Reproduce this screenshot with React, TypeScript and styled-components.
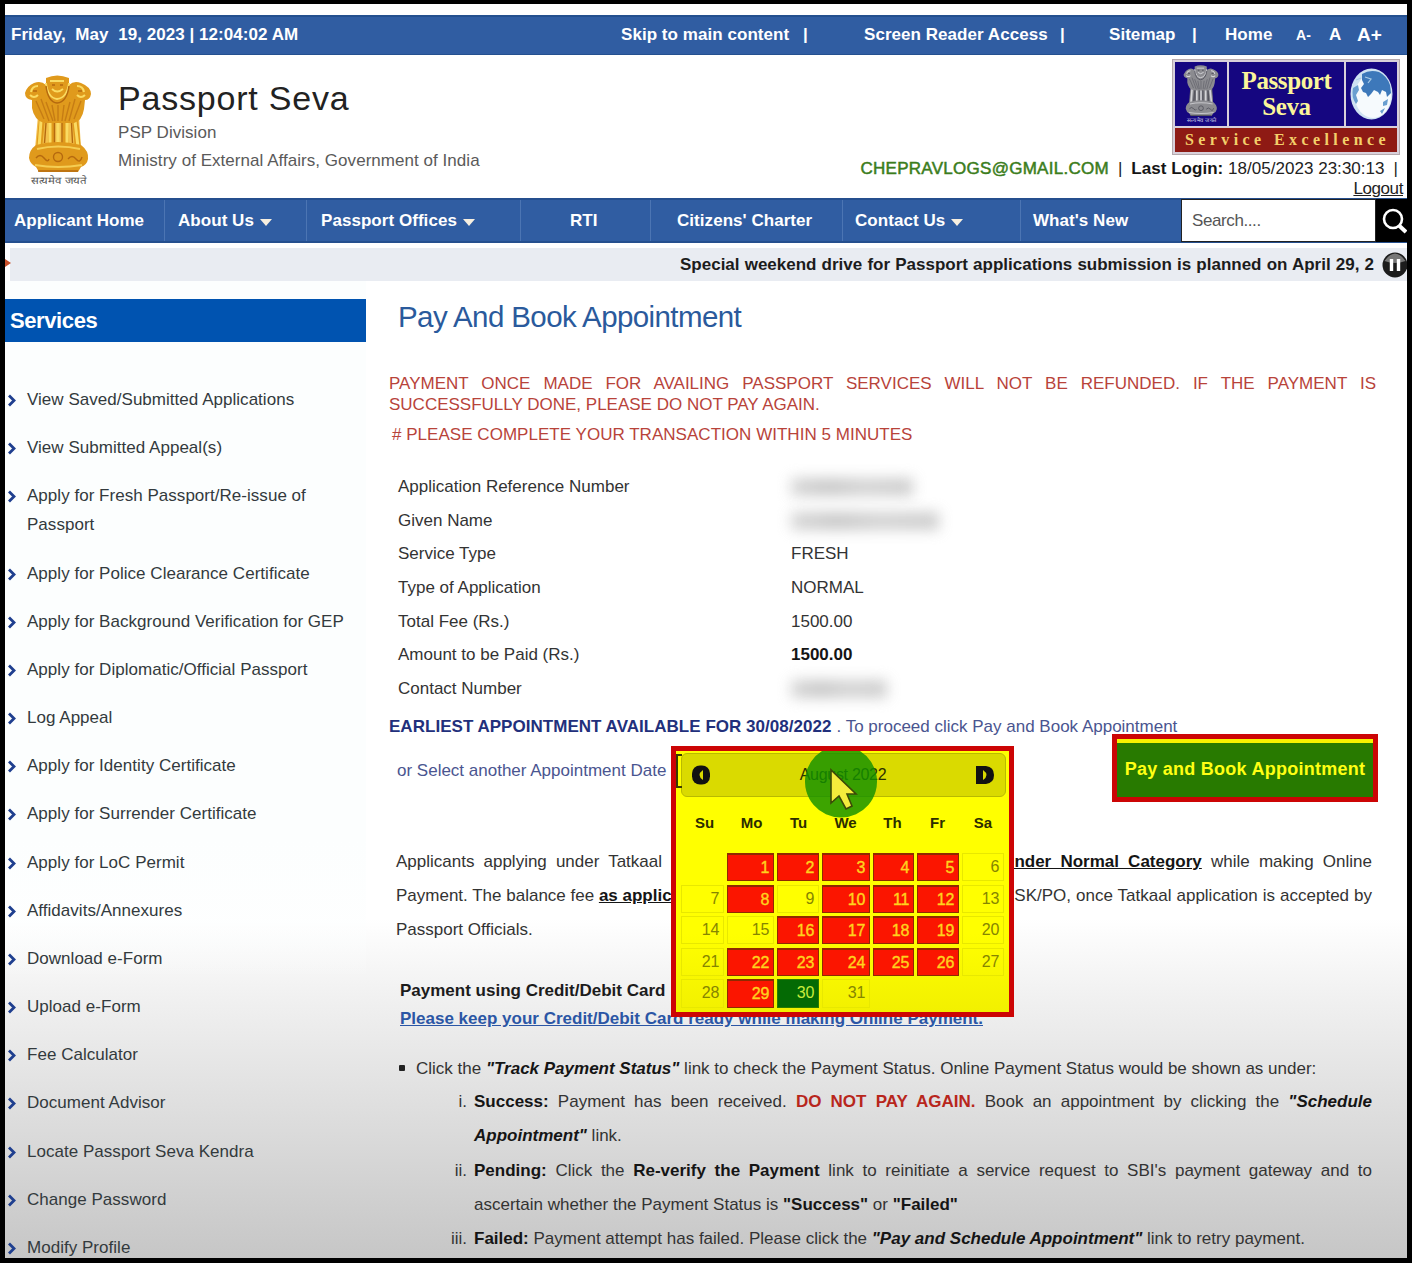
import React from 'react';
import styled, { createGlobalStyle, css } from 'styled-components';

const GlobalStyle = createGlobalStyle`
  * { box-sizing: border-box; }
  html, body { margin: 0; padding: 0; background: #000; }
  body { font-family: "Liberation Sans", Arial, sans-serif; font-size: 17px; color: #333; }
  p, h1, h2, ul, ol { margin: 0; padding: 0; font-weight: normal; }
`;

const Page = styled.div`
  position: relative;
  width: 1412px;
  height: 1263px;
  overflow: hidden;
  display: flex;
  flex-direction: column;
  border: solid #000;
  border-width: 4px 5px 5px 5px;
  background: linear-gradient(#fff 0 915px, #f2f2f2 985px, #dcdcdc 1120px, #c6c6c6 1254px);
`;

/* A single line of text, optionally stretched over a given width. */
const Line = styled.span<{ $w?: number; $ls?: number }>`
  display: inline-block;
  flex: none;
  white-space: nowrap;
  ${(p) => p.$w && css`width: ${p.$w}px; text-align: justify; text-align-last: justify;`}
  ${(p) => p.$ls && css`letter-spacing: ${p.$ls}px;`}
`;

const TopBar = styled.header`
  flex: none;
  display: grid;
  grid-template-columns: 610px 182px 61px 196px 49px 83px 33px 71px 33px 28px auto;
  align-items: center;
  height: 40px;
  margin-top: 11px;
  padding: 0 0 1px 6px;
  border-top: 2px solid #24508f;
  border-bottom: 1px solid #24508f;
  background: #305da2;
  color: #fff;
  font-weight: bold;
  letter-spacing: 0.05px;
  white-space: pre;
`;

const FontSize = styled.span<{ $size: number }>`
  font-size: ${(p) => p.$size}px;
`;

const Masthead = styled.div`
  flex: none;
  display: flex;
  height: 143px;
`;

const EmblemBox = styled.div`
  width: 113px;
  padding: 20px 0 0 19px;
`;

const Brand = styled.div`
  flex: 1;
  padding-top: 23px;
  color: #5a5a5a;
`;

const BrandTitle = styled.h1`
  font-size: 34px;
  line-height: 41px;
  letter-spacing: 0.8px;
  color: #222;
`;

const BrandLine = styled.p`
  line-height: 28px;
  letter-spacing: 0.04px;
`;

const Account = styled.div`
  width: 560px;
  display: flex;
  flex-direction: column;
  align-items: flex-end;
`;

const LogoBox = styled.div`
  width: 228px;
  height: 97px;
  margin: 4px 7px 0 0;
  padding: 2px;
  border: 1px solid #b5a9ad;
  background: #d8d0da;
  display: flex;
  flex-direction: column;
`;

const LogoTop = styled.div`
  display: grid;
  grid-template-columns: 52px 115px 51px;
  gap: 2px;
  height: 64px;
`;

const LogoCell = styled.div`
  display: flex;
  align-items: center;
  justify-content: center;
  background: #150680;
`;

const LogoName = styled.div`
  font: bold 25px/26px "Liberation Serif", serif;
  letter-spacing: -0.4px;
  text-align: center;
  color: #fbf59a;
`;

const LogoMotto = styled.div`
  flex: 1;
  margin-top: 2px;
  padding-left: 3px;
  background: #8e1a14;
  color: #f3cf6a;
  font: bold 16px/23px "Liberation Serif", serif;
  letter-spacing: 4.4px;
  text-align: center;
  white-space: nowrap;
`;

const LoginLine = styled.div`
  display: flex;
  gap: 9px;
  margin: 4px 9px 0 0;
  line-height: 20px;
  white-space: nowrap;
  color: #222;
`;

const Mail = styled.span`
  color: #3b7d1c;
  -webkit-text-stroke: 0.5px #3b7d1c;
  letter-spacing: 0.27px;
`;

const Logout = styled.a`
  margin: 1px 4px 0 0;
  line-height: 18px;
  letter-spacing: -0.4px;
  text-decoration: underline;
  color: #222;
`;

const Nav = styled.nav`
  flex: none;
  display: grid;
  grid-template-columns: 160px 142px 214px 130px 192px 178px 160px 195px 31px;
  height: 45px;
  border-top: 2px solid #254f8e;
  border-bottom: 2px solid #254f8e;
  background: #305da2;
`;

const NavItem = styled.a<{ $pad: number }>`
  display: flex;
  align-items: center;
  padding-left: ${(p) => p.$pad}px;
  border-right: 1px solid #4c75b3;
  color: #fff;
  font-weight: bold;
  letter-spacing: 0.05px;
  white-space: nowrap;
  &:nth-child(7) { border-right: 0; }
`;

const Caret = styled.i`
  margin: 3px 0 0 6px;
  border: 6.5px solid transparent;
  border-top: 7px solid #f7efe0;
  border-bottom: 0;
`;

const Search = styled.div`
  display: flex;
  align-items: center;
  margin: -1px 0;
  padding-left: 10px;
  border: 1px solid #222;
  background: #fff;
  color: #555;
  letter-spacing: -0.4px;
`;

const SearchButton = styled.div`
  display: flex;
  align-items: center;
  padding-left: 5px;
  margin: -1px 0;
  background: #000;
`;

const Ticker = styled.div`
  flex: none;
  display: flex;
  align-items: center;
  justify-content: flex-end;
  height: 33px;
  margin: 5px 0 0 0;
  background: linear-gradient(90deg, #fff 5px, #e9ecf2 5px);
  color: #1c1c1c;
  font-weight: bold;
`;

const TickerMark = styled.i`
  margin: -3px auto 0 0;
  border: 4px solid transparent;
  border-left: 6px solid #c8502a;
  border-right: 0;
`;

const Body = styled.div`
  flex: 1;
  display: grid;
  grid-template-columns: 361px 1fr;
  min-height: 0;
`;

const Sidebar = styled.aside`
  padding-top: 18px;
  background: linear-gradient(#fcfefe 0 560px, rgba(252, 254, 254, 0) 700px);
`;

const SidebarTitle = styled.h2`
  height: 43px;
  padding-left: 5px;
  background: #0053b0;
  color: #fff;
  font-size: 22px;
  font-weight: bold;
  line-height: 43px;
  letter-spacing: -0.4px;
`;

const ServiceList = styled.ul`
  display: flex;
  flex-direction: column;
  gap: 19.18px;
  padding-top: 43px;
  list-style: none;
`;

const Service = styled.li`
  display: flex;
  gap: 11px;
  padding-left: 3px;
  line-height: 29px;
  color: #333a3d;
  svg { flex: none; margin-top: 9px; }
`;

const ServiceLabel = styled.span`
  white-space: pre-line;
  letter-spacing: 0.03px;
`;

const Main = styled.main`
  display: flex;
  flex-direction: column;
  padding-left: 23px;
  color: #333;
`;

const Title = styled.h2`
  height: 75px;
  padding: 18px 0 0 9px;
  font-size: 29.5px;
  line-height: 36px;
  letter-spacing: -0.6px;
  color: #2a5a9c;
`;

const Warning = styled.div`
  display: flex;
  flex-direction: column;
  margin-top: 17px;
  line-height: 21px;
  color: #b8433a;
`;

const TimeLimit = styled.p`
  margin: 9px 0 0 3px;
  letter-spacing: 0.03px;
`;

const Fields = styled.dl`
  display: grid;
  grid-template-columns: 393px 200px;
  grid-auto-rows: 33.6px;
  align-items: center;
  margin: 25.5px 0 0;
  padding-left: 9px;
  dd { margin: 0; }
`;

const Redacted = styled.div<{ $w: number }>`
  width: ${(p) => p.$w}px;
  height: 18px;
  background: linear-gradient(90deg, #c9c9c9, #b5b5b5 30%, #c4c4c4 60%, #bcbcbc);
  filter: blur(7px);
  opacity: 0.75;
`;

const Earliest = styled.p`
  display: flex;
  gap: 5px;
  margin-top: 10.3px;
  line-height: 22px;
  color: #4a5590;
  b { color: #22307c; }
`;

const DateRow = styled.p`
  margin-top: 22px;
  padding-left: 8px;
  line-height: 22px;
  color: #4a5590;
`;

const Note = styled.div`
  display: flex;
  flex-direction: column;
  margin-top: 63px;
  padding-left: 7px;
  line-height: 34px;
`;

const Row = styled.div`
  display: flex;
  justify-content: space-between;
  width: 976px;
`;

const Strong = styled.b`
  color: #151515;
`;

const Key = styled.b`
  color: #151515;
  text-decoration: underline;
`;

const CardNote = styled.div`
  display: flex;
  flex-direction: column;
  margin-top: 30px;
  padding-left: 11px;
  font-weight: bold;
  line-height: 28px;
  color: #1c1c1c;
`;

const CardLink = styled(Line)`
  color: #2b56a5;
  text-decoration: underline;
`;

const Status = styled.div`
  display: flex;
  align-items: center;
  margin-top: 19px;
  padding-left: 10px;
  line-height: 33px;
`;

const Bullet = styled.i`
  width: 6px;
  height: 6px;
  margin-right: 11px;
  border-radius: 1px;
  background: #222;
`;

const Step = styled.div`
  display: grid;
  grid-template-columns: 78px 1fr;
  column-gap: 7px;
  line-height: 34.3px;
`;

const StepNo = styled.span`
  text-align: right;
`;

const StepText = styled.div`
  display: flex;
  flex-direction: column;
`;

const Danger = styled.b`
  color: #b8261c;
`;

const Em = styled.b`
  font-style: italic;
  color: #151515;
`;

const PayButton = styled.button`
  position: absolute;
  left: 1107px;
  top: 730px;
  width: 266px;
  height: 68px;
  padding: 3px 0 0;
  border: 5px solid #cc0505;
  background: linear-gradient(#f7f200 0 4px, #287a00 4px);
  color: #ffff14;
  font: bold 18px "Liberation Sans", Arial, sans-serif;
  letter-spacing: 0.25px;
`;

const Calendar = styled.div`
  position: absolute;
  left: 666px;
  top: 742px;
  width: 343px;
  height: 271px;
  padding: 2px 3px 0 5px;
  border: 5px solid #cc0505;
  background: linear-gradient(#ff0 70%, #f2f000);
`;

const MonthBar = styled.div`
  display: flex;
  align-items: center;
  justify-content: space-between;
  height: 44px;
  padding: 0 10px 0 9px;
  border: 1px solid #b9ba00;
  border-radius: 6px;
  background: #dada00;
  color: #2c3000;
  font-size: 16px;
  letter-spacing: -0.3px;
`;

const WeekHead = styled.div`
  display: grid;
  grid-template-columns: 47px 47px 47px 47px 47px 43px 48px;
  height: 56px;
  line-height: 52px;
  font-size: 15px;
  font-weight: bold;
  text-align: center;
  color: #2c2d00;
`;

const Days = styled.div`
  display: grid;
  grid-template-columns: 43px 47px 42px 48px 41px 42px 42px;
  grid-template-rows: 28px 28px 28px 28px 29px;
  gap: 3.5px;
  column-gap: 3px;
`;

type DayKind = 'empty' | 'off' | 'full' | 'open';

const Day = styled.div<{ $kind: DayKind }>`
  padding-right: 4px;
  border: 1px solid transparent;
  line-height: 26px;
  font-size: 16px;
  letter-spacing: -0.3px;
  text-align: right;
  color: #858500;
  ${(p) => p.$kind === 'off' && css`border-color: #e8e800;`}
  ${(p) => p.$kind === 'full' && css`
    border-color: #8f2a00;
    border-top-width: 2px;
    background: #fb1500;
    color: #ffd21e;
    -webkit-text-stroke: 0.4px #ffd21e;
    line-height: 25px;
  `}
  ${(p) => p.$kind === 'open' && css`
    border-color: #2c7a00;
    background: #046a04;
    color: #c8ec3c;
  `}
`;

const Pointer = styled.svg`
  position: absolute;
  left: 127px;
  top: 0;
`;

const FieldBracket = styled.i`
  position: absolute;
  left: 0;
  top: 3px;
  width: 6px;
  height: 34px;
  border: 2px solid #3a3b00;
  border-right: 0;
`;

const services = [
  'View Saved/Submitted Applications',
  'View Submitted Appeal(s)',
  'Apply for Fresh Passport/Re-issue of\nPassport',
  'Apply for Police Clearance Certificate',
  'Apply for Background Verification for GEP',
  'Apply for Diplomatic/Official Passport',
  'Log Appeal',
  'Apply for Identity Certificate',
  'Apply for Surrender Certificate',
  'Apply for LoC Permit',
  'Affidavits/Annexures',
  'Download e-Form',
  'Upload e-Form',
  'Fee Calculator',
  'Document Advisor',
  'Locate Passport Seva Kendra',
  'Change Password',
  'Modify Profile',
];

const openDays = [6, 7, 9, 13, 14, 15, 20, 21, 27, 28, 31];

const kindOf = (day: number): DayKind => {
  if (day === 30) return 'open';
  return openDays.includes(day) ? 'off' : 'full';
};

function Emblem({ tone, width, height }: { tone: 'gold' | 'silver'; width: number; height: number }) {
  const gold = tone === 'gold';
  const base = gold ? '#e09a1c' : '#8b8b90';
  const dark = gold ? '#b5690f' : '#4a4a55';
  const light = gold ? '#fadb62' : '#d4d4d8';
  return (
    <svg width={width} height={height} viewBox="0 0 68 112">
      <path d="M14 40H55L57 74H11Z" fill={gold ? '#f3c04a' : '#6a6a72'} />
      <path d="M18 44L15 74M28 46L27 74M41 46L42 74M51 44L54 74" stroke={base} strokeWidth="6" />
      <path d="M17 46L15 72M26 48L26 72M34 48V72M43 48L43 72M51 46L54 72" stroke={light} strokeWidth="3" />
      <path d="M22 48L20.500 68M30.500 48V70M38 48V70M47.500 48L48.500 68" stroke={dark} strokeWidth="1.400" />
      <path d="M22 3Q33-2 45 3L45 10Q50 5 57 8Q67 12 67 19Q66 25 61 25L60 34Q58 46 50 48L20 48Q10 45 8 33L8 25Q1 24 1 18Q3 11 10 8Q17 5 22 10Z" fill={base} />
      <path d="M7 17q1-6 7-6M6 20q4 4 8 0M60 17q-1-6-7-6M61 20q-4 4-8 0" fill="none" stroke={light} strokeWidth="2" />
      <path d="M22 8Q24 23 33 24Q43 23 45 8M26 6H40M28 14Q33 19 39 14" fill="none" stroke={light} strokeWidth="1.800" />
      <path d="M22 11Q24 27 33 28Q43 27 45 11M9 16h4M54 16h4M28 10h3M36 10h3" fill="none" stroke={dark} strokeWidth="1.500" />
      <path d="M12 26L20 44M17 24L25 46M22 27L29 46M28 30L31 46M34 30V46M40 30L38 46M46 27L41 46M51 24L45 46M57 26L50 44" stroke={dark} strokeWidth="1.400" opacity="0.6" />
      <path d="M12 70Q33 64 57 70Q65 76 64 84Q63 90 57 92L54 97H15L12 92Q6 89 5 83Q5 75 12 70Z" fill={base} />
      <path d="M13 74Q34 69 56 74M11 90Q34 94 58 90" fill="none" stroke={light} strokeWidth="2" opacity="0.8" />
      <path d="M14 96H54" stroke={dark} strokeWidth="1.600" />
      <circle cx="34" cy="82" r="4.500" fill="none" stroke={dark} strokeWidth="1.400" />
      <path d="M12 83q4-5 8 0t5 1M44 84q4-5 8 0t6-2" fill="none" stroke={dark} strokeWidth="1.400" />
      <text x="35" y="109" textAnchor="middle" fontSize="10" textLength="56" lengthAdjust="spacingAndGlyphs" fill={gold ? '#555' : '#d5d5ea'}>
        सत्यमेव जयते
      </text>
    </svg>
  );
}

function Globe() {
  return (
    <svg width="43" height="52" viewBox="0 0 43 52">
      <ellipse cx="21.500" cy="26" rx="21" ry="25.500" fill="#cfe2f2" />
      <ellipse cx="23" cy="28" rx="18" ry="22" fill="#f6fafd" />
      <path d="M12 6Q20 1 29 4Q37 8 40 17L41 25L37 29L36 24L32 22L30 27L28 24L24 22L21 26L18 29L16 25L13 24L11 20L14 16L12 12Z" fill="#3d78ba" />
      <path d="M3 20L8 17L9 22L6 27L8 33L6 36Q1 29 3 20ZM33 34L38 31L37 37L33 38ZM30 43l5-3-3 6z" fill="#6a9fd0" />
      <path d="M15 9l6 2-3 4M6 12l5-2" fill="none" stroke="#a9cbe6" strokeWidth="1.200" />
    </svg>
  );
}

export default function App() {
  return (
    <>
      <GlobalStyle />
      <Page>
        <TopBar>
          <span>{'Friday,  May  19, 2023 | 12:04:02 AM'}</span>
          <span>Skip to main content</span>
          <span>|</span>
          <span>Screen Reader Access</span>
          <span>|</span>
          <span>Sitemap</span>
          <span>|</span>
          <span>Home</span>
          <FontSize $size={14}>A-</FontSize>
          <FontSize $size={17}>A</FontSize>
          <FontSize $size={19}>A+</FontSize>
        </TopBar>

        <Masthead>
          <EmblemBox>
            <Emblem tone="gold" width={68} height={112} />
          </EmblemBox>
          <Brand>
            <BrandTitle>Passport Seva</BrandTitle>
            <BrandLine>PSP Division</BrandLine>
            <BrandLine>Ministry of External Affairs, Government of India</BrandLine>
          </Brand>
          <Account>
            <LogoBox>
              <LogoTop>
                <LogoCell><Emblem tone="silver" width={36} height={59} /></LogoCell>
                <LogoCell><LogoName>Passport<br />Seva</LogoName></LogoCell>
                <LogoCell><Globe /></LogoCell>
              </LogoTop>
              <LogoMotto>Service Excellence</LogoMotto>
            </LogoBox>
            <LoginLine>
              <Mail>CHEPRAVLOGS@GMAIL.COM</Mail>
              <span>|</span>
              <Line $ls={0.03}><Strong>Last Login:</Strong> 18/05/2023 23:30:13</Line>
              <span>|</span>
            </LoginLine>
            <Logout>Logout</Logout>
          </Account>
        </Masthead>

        <Nav>
          <NavItem $pad={9}>Applicant Home</NavItem>
          <NavItem $pad={13}>About Us<Caret /></NavItem>
          <NavItem $pad={14}>Passport Offices<Caret /></NavItem>
          <NavItem $pad={49}>RTI</NavItem>
          <NavItem $pad={26}>Citizens' Charter</NavItem>
          <NavItem $pad={12}>Contact Us<Caret /></NavItem>
          <NavItem $pad={12}>What's New</NavItem>
          <Search>Search....</Search>
          <SearchButton>
            <svg width="26" height="28" viewBox="0 0 26 28" fill="none" stroke="#fff" strokeWidth="2.600">
              <circle cx="12" cy="12" r="9" />
              <path d="M18 18.500L25 25" strokeWidth="4" />
            </svg>
          </SearchButton>
        </Nav>

        <Ticker>
          <TickerMark />
          <Line $w={694}>Special weekend drive for Passport applications submission is planned on April 29, 2</Line>
          <svg width="33" height="28" viewBox="0 0 33 28">
            <circle cx="21" cy="14" r="12.500" fill="#1c1c1c" />
            <path d="M10.500 10Q21-5 31.500 10Q21 14 10.500 10Z" fill="#777" />
            <path d="M17.500 8V20M24.500 8V20" stroke="#fff" strokeWidth="3.400" />
          </svg>
        </Ticker>

        <Body>
          <Sidebar>
            <SidebarTitle>Services</SidebarTitle>
            <ServiceList>
              {services.map((name) => (
                <Service key={name}>
                  <svg width="8" height="13" viewBox="0 0 8 13" fill="none" stroke="#1f3f8f" strokeWidth="2.800">
                    <path d="M1 1.500L6 6.500L1 11.500" />
                  </svg>
                  <ServiceLabel>{name}</ServiceLabel>
                </Service>
              ))}
            </ServiceList>
          </Sidebar>

          <Main>
            <Title>Pay And Book Appointment</Title>
            <Warning>
              <Line $w={987}>PAYMENT ONCE MADE FOR AVAILING PASSPORT SERVICES WILL NOT BE REFUNDED. IF THE PAYMENT IS</Line>
              <Line>SUCCESSFULLY DONE, PLEASE DO NOT PAY AGAIN.</Line>
              <TimeLimit># PLEASE COMPLETE YOUR TRANSACTION WITHIN 5 MINUTES</TimeLimit>
            </Warning>
            <Fields>
              <dt>Application Reference Number</dt><dd><Redacted $w={122} /></dd>
              <dt>Given Name</dt><dd><Redacted $w={148} /></dd>
              <dt>Service Type</dt><dd>FRESH</dd>
              <dt>Type of Application</dt><dd>NORMAL</dd>
              <dt>Total Fee (Rs.)</dt><dd>1500.00</dd>
              <dt>Amount to be Paid (Rs.)</dt><dd><Strong>1500.00</Strong></dd>
              <dt>Contact Number</dt><dd><Redacted $w={96} /></dd>
            </Fields>
            <Earliest>
              <Line $ls={0.03}><b>EARLIEST APPOINTMENT AVAILABLE FOR 30/08/2022</b></Line>
              <Line>. To proceed click Pay and Book Appointment</Line>
            </Earliest>
            <DateRow>or Select another Appointment Date</DateRow>
            <Note>
              <Row>
                <Line $w={266}>Applicants applying under Tatkaal</Line>
                <Line $w={368}><Key>under Normal Category</Key> while making Online</Line>
              </Row>
              <Row>
                <Line>Payment. The balance fee <Key>as applicable</Key></Line>
                <Line $w={369}>PSK/PO, once Tatkaal application is accepted by</Line>
              </Row>
              <Row>Passport Officials.</Row>
            </Note>
            <CardNote>
              <Line>Payment using Credit/Debit Card :</Line>
              <CardLink as="a" $w={583}>Please keep your Credit/Debit Card ready while making Online Payment.</CardLink>
            </CardNote>
            <Status>
              <Bullet />
              <Line>Click the <Em>"Track Payment Status"</Em> link to check the Payment Status. Online Payment Status would be shown as under:</Line>
            </Status>
            <Step>
              <StepNo>i.</StepNo>
              <StepText>
                <Line $w={898}><Strong>Success:</Strong> Payment has been received. <Danger>DO NOT PAY AGAIN.</Danger> Book an appointment by clicking the <Em>"Schedule</Em></Line>
                <Line><Em>Appointment"</Em> link.</Line>
              </StepText>
            </Step>
            <Step>
              <StepNo>ii.</StepNo>
              <StepText>
                <Line $w={898}><Strong>Pending:</Strong> Click the <Strong>Re-verify the Payment</Strong> link to reinitiate a service request to SBI's payment gateway and to</Line>
                <Line>ascertain whether the Payment Status is <Strong>"Success"</Strong> or <Strong>"Failed"</Strong></Line>
              </StepText>
            </Step>
            <Step>
              <StepNo>iii.</StepNo>
              <StepText>
                <Line><Strong>Failed:</Strong> Payment attempt has failed. Please click the <Em>"Pay and Schedule Appointment"</Em> link to retry payment.</Line>
              </StepText>
            </Step>
          </Main>
        </Body>

        <PayButton>Pay and Book Appointment</PayButton>

        <Calendar>
          <FieldBracket />
          <MonthBar>
            <svg width="20" height="20" viewBox="0 0 20 20">
              <rect x="1" y="0.500" width="18" height="19" rx="8" fill="#111" />
              <path d="M12 5V15Q5 10 12 5Z" fill="#dada00" />
            </svg>
            <span>August 2022</span>
            <svg width="20" height="20" viewBox="0 0 20 20">
              <path d="M1 1H11Q19 2 19 10Q19 18 11 19H1Z" fill="#111" />
              <path d="M8 5V15Q15 10 8 5Z" fill="#dada00" />
            </svg>
          </MonthBar>
          <WeekHead>
            {['Su', 'Mo', 'Tu', 'We', 'Th', 'Fr', 'Sa'].map((d) => <span key={d}>{d}</span>)}
          </WeekHead>
          <Days>
            <Day $kind="empty" />
            {Array.from({ length: 31 }, (_, i) => i + 1).map((d) => (
              <Day key={d} $kind={kindOf(d)}>{d}</Day>
            ))}
          </Days>
          <Pointer width="76" height="74" viewBox="0 0 76 74">
            <path d="M19 0H57A36 36 0 1 1 19 0Z" fill="#129000" fillOpacity="0.82" />
            <path d="M28 19V52L36 45L43 58L49 55L44 43H53Z" fill="#f4ec3c" stroke="#3c4a08" strokeWidth="1.600" />
          </Pointer>
        </Calendar>
      </Page>
    </>
  );
}
